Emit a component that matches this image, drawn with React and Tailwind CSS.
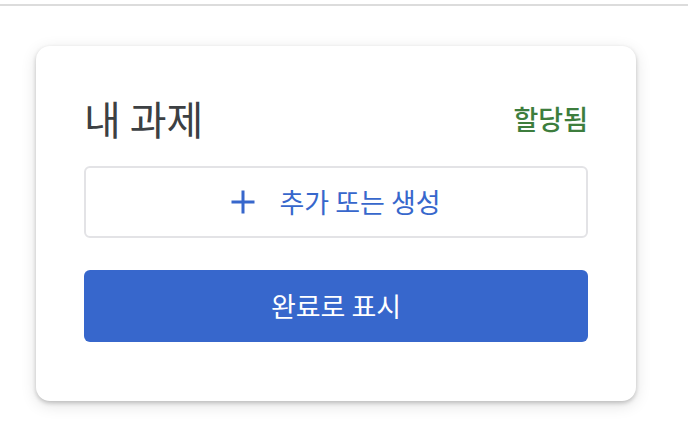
const FONT = { fontFamily: '"Noto Sans CJK KR", "Noto Sans", sans-serif' }

function PlusIcon() {
  return (
    <svg width="24" height="24" viewBox="0 0 24 24" fill="none" aria-hidden="true">
      <path d="M12 0.5v23M0.5 12h23" stroke="#3767cc" strokeWidth="3" />
    </svg>
  )
}

export default function App() {
  return (
    <div className="min-h-screen bg-white" style={FONT}>
      <div className="pt-1">
        <div className="h-[2px] bg-[#dcdcdc]" />
      </div>

      <div className="ml-9 mt-10 w-[600px] rounded-[14px] bg-white px-12 pb-[59px] pt-[51px] shadow-[0_2px_4px_rgba(0,0,0,0.2),0_4px_16px_rgba(0,0,0,0.12)]">
        <div className="flex items-center justify-between">
          <h2 className="text-[40px] leading-[43px] font-normal text-[#3c4043]">내 과제</h2>
          <span className="text-[27px] leading-none font-medium text-[#3d7d3d]">할당됨</span>
        </div>

        <button
          type="button"
          className="mt-[26px] flex h-[72px] w-full items-center justify-center gap-6 rounded-md border-2 border-[#e3e3e6] bg-white text-[27px] text-[#3767cc]"
        >
          <PlusIcon />
          <span>추가 또는 생성</span>
        </button>

        <button
          type="button"
          className="mt-8 flex h-[72px] w-full items-center justify-center rounded-md bg-[#3767cc] text-[27px] text-white"
        >
          완료로 표시
        </button>
      </div>
    </div>
  )
}
